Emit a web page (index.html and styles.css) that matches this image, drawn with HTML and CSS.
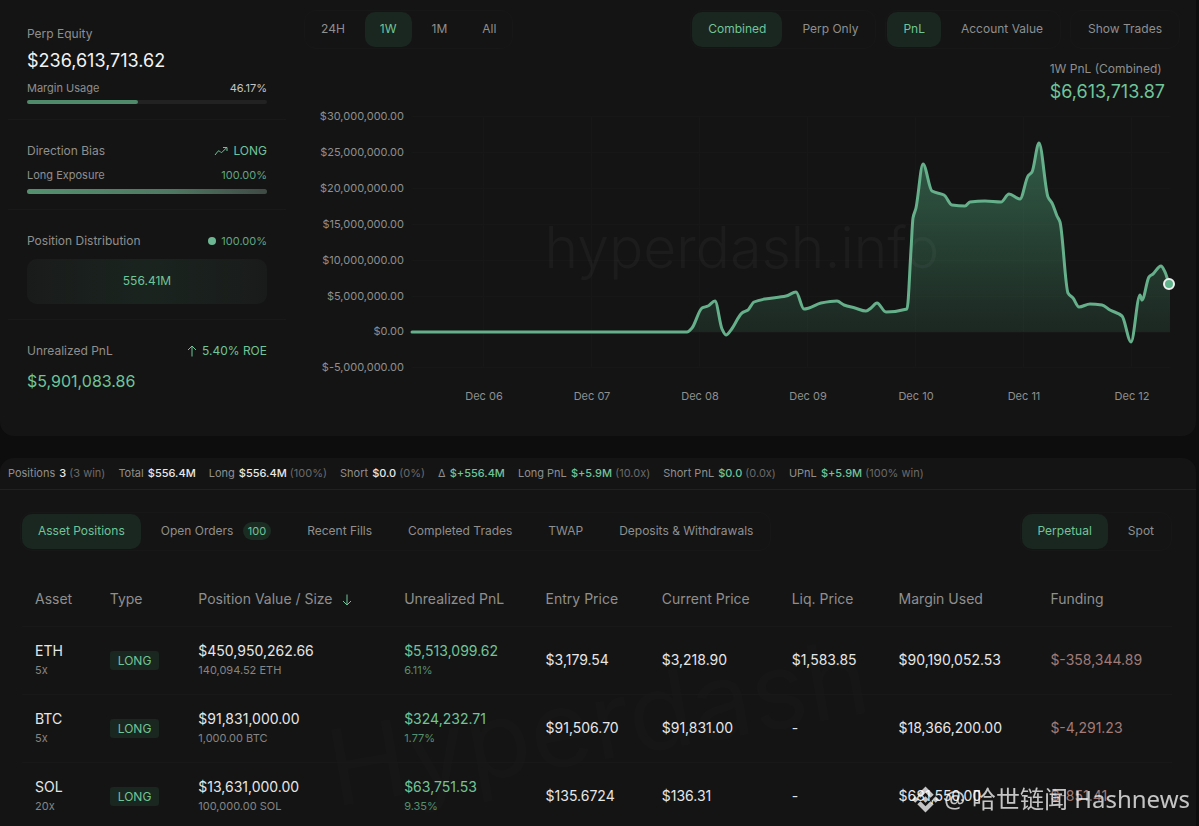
FILE: index.html
```html
<!DOCTYPE html>
<html lang="en">
<head>
  <meta charset="UTF-8">
  <meta name="viewport" content="width=device-width, initial-scale=1.0">
  <title>Hyperdash - Trader</title>
  <link rel="stylesheet" href="styles.css">
</head>
<body>
  <section class="panel overview">
    <aside class="summary">
      <div class="summary-block">
        <div class="summary-title">Perp Equity</div>
        <div class="summary-value">$236,613,713.62</div>
        <div class="summary-row small"><span>Margin Usage</span><span class="light">46.17%</span></div>
        <div class="bar"><div class="bar-fill" style="width: 46.17%"></div></div>
      </div>
      <div class="summary-block">
        <div class="summary-row">
          <span>Direction Bias</span>
          <span class="green icon-text">
            <svg width="14" height="10" viewBox="0 0 14 10"><path d="M1 9 L4 5.2 Q4.8 4.4 5.6 5.2 L6.6 6.2 Q7.4 7 8.2 6 L12.4 2 M9 1.5 L13 1.5 L13 5"/></svg>
            LONG
          </span>
        </div>
        <div class="summary-row small exposure"><span>Long Exposure</span><span class="green-dim">100.00%</span></div>
        <div class="bar bar-long"><div class="bar-fill bar-fade" style="width: 100%"></div></div>
      </div>
      <div class="summary-block">
        <div class="summary-row">
          <span>Position Distribution</span>
          <span class="green-dim small icon-text"><i class="dot"></i>100.00%</span>
        </div>
        <div class="distribution">556.41M</div>
      </div>
      <div class="summary-block">
        <div class="summary-row">
          <span>Unrealized PnL</span>
          <span class="green icon-text">
            <svg width="10" height="12" viewBox="0 0 10 12"><path d="M5 11.5 V1 M1 5 L5 1 L9 5"/></svg>
            5.40% ROE
          </span>
        </div>
        <div class="summary-value upnl">$5,901,083.86</div>
      </div>
    </aside>

    <div class="chart-pane">
      <div class="toolbar">
        <div class="group ranges">
          <button type="button">24H</button>
          <button type="button" class="active">1W</button>
          <button type="button">1M</button>
          <button type="button">All</button>
        </div>
        <div class="toolbar-right">
          <div class="group">
            <button type="button" class="active">Combined</button>
            <button type="button">Perp Only</button>
          </div>
          <div class="group">
            <button type="button" class="active">PnL</button>
            <button type="button">Account Value</button>
          </div>
          <div class="group">
            <button type="button">Show Trades</button>
          </div>
        </div>
      </div>
      <div class="chart-total">
        <div>
          <div class="chart-label">1W PnL (Combined)</div>
          <div class="chart-value">$6,613,713.87</div>
        </div>
      </div>
      <svg class="chart" viewBox="300 104 880 306">
        <defs>
          <linearGradient id="area" gradientUnits="userSpaceOnUse" x1="0" y1="143" x2="0" y2="332">
            <stop offset="0" stop-color="#55b384" stop-opacity="0.45"/>
            <stop offset="1" stop-color="#55b384" stop-opacity="0.12"/>
          </linearGradient>
          <clipPath id="above"><rect x="412" y="104" width="758" height="228"/></clipPath>
        </defs>
        <g class="grid">
          <path d="M412 116.5 H1170 M412 152.5 H1170 M412 188.5 H1170 M412 224.5 H1170 M412 260.5 H1170 M412 296.5 H1170 M412 332.5 H1170 M412 367.5 H1170"/>
          <path d="M483.5 116 V368 M591.5 116 V368 M699.5 116 V368 M807.5 116 V368 M915.5 116 V368 M1023.5 116 V368 M1131.5 116 V368"/>
        </g>
        <path id="pnlArea" fill="url(#area)" clip-path="url(#above)"/>
        <text class="chart-mark" x="742" y="268">hyperdash.info</text>
        <g class="y-labels">
          <text x="404" y="120">$30,000,000.00</text>
          <text x="404" y="156">$25,000,000.00</text>
          <text x="404" y="192">$20,000,000.00</text>
          <text x="404" y="228">$15,000,000.00</text>
          <text x="404" y="264">$10,000,000.00</text>
          <text x="404" y="300">$5,000,000.00</text>
          <text x="404" y="335">$0.00</text>
          <text x="404" y="371">$-5,000,000.00</text>
        </g>
        <g class="x-labels">
          <text x="484" y="400">Dec 06</text>
          <text x="592" y="400">Dec 07</text>
          <text x="700" y="400">Dec 08</text>
          <text x="808" y="400">Dec 09</text>
          <text x="916" y="400">Dec 10</text>
          <text x="1024" y="400">Dec 11</text>
          <text x="1132" y="400">Dec 12</text>
        </g>
        <path id="pnlLine" class="line"/>
        <circle class="marker" cx="1169" cy="284" r="5"/>
      </svg>
    </div>
  </section>

  <section class="panel positions">
    <div class="stats">
      <span>Positions <b>3</b> <em>(3 win)</em></span>
      <span>Total <b>$556.4M</b></span>
      <span>Long <b>$556.4M</b> <em>(100%)</em></span>
      <span>Short <b>$0.0</b> <em>(0%)</em></span>
      <span>Δ <b class="green">$+556.4M</b></span>
      <span>Long PnL <b class="green">$+5.9M</b> <em>(10.0x)</em></span>
      <span>Short PnL <b class="green">$0.0</b> <em>(0.0x)</em></span>
      <span>UPnL <b class="green">$+5.9M</b> <em>(100% win)</em></span>
    </div>

    <div class="tabs">
      <div class="group">
        <button type="button" class="active">Asset Positions</button>
        <button type="button">Open Orders <span class="count">100</span></button>
        <button type="button">Recent Fills</button>
        <button type="button">Completed Trades</button>
        <button type="button">TWAP</button>
        <button type="button">Deposits &amp; Withdrawals</button>
      </div>
      <div class="group">
        <button type="button" class="active">Perpetual</button>
        <button type="button">Spot</button>
      </div>
    </div>

    <div class="table-wrap">
      <div class="table-mark">Hyperdash</div>
      <table>
        <colgroup>
          <col class="c-asset"><col class="c-type"><col class="c-value"><col class="c-upnl"><col class="c-entry">
          <col class="c-current"><col class="c-liq"><col class="c-margin"><col>
        </colgroup>
        <thead>
          <tr>
            <th>Asset</th>
            <th>Type</th>
            <th>Position Value / Size
              <svg class="sort" width="10" height="12" viewBox="0 0 10 12"><path d="M5 0.5 V11 M1 7 L5 11 L9 7"/></svg>
            </th>
            <th>Unrealized PnL</th>
            <th>Entry Price</th>
            <th>Current Price</th>
            <th>Liq. Price</th>
            <th>Margin Used</th>
            <th>Funding</th>
          </tr>
        </thead>
        <tbody>
          <tr>
            <td>ETH<small>5x</small></td>
            <td><span class="side">LONG</span></td>
            <td>$450,950,262.66<small>140,094.52 ETH</small></td>
            <td class="green">$5,513,099.62<small>6.11%</small></td>
            <td>$3,179.54</td>
            <td>$3,218.90</td>
            <td>$1,583.85</td>
            <td>$90,190,052.53</td>
            <td class="red">$-358,344.89</td>
          </tr>
          <tr>
            <td>BTC<small>5x</small></td>
            <td><span class="side">LONG</span></td>
            <td>$91,831,000.00<small>1,000.00 BTC</small></td>
            <td class="green">$324,232.71<small>1.77%</small></td>
            <td>$91,506.70</td>
            <td>$91,831.00</td>
            <td>-</td>
            <td>$18,366,200.00</td>
            <td class="red">$-4,291.23</td>
          </tr>
          <tr>
            <td>SOL<small>20x</small></td>
            <td><span class="side">LONG</span></td>
            <td>$13,631,000.00<small>100,000.00 SOL</small></td>
            <td class="green">$63,751.53<small>9.35%</small></td>
            <td>$135.6724</td>
            <td>$136.31</td>
            <td>-</td>
            <td>$681,550.00</td>
            <td class="red">$-851.41</td>
          </tr>
        </tbody>
      </table>
    </div>
  </section>

  <div class="credit">
    <svg width="27" height="27" viewBox="0 0 28 28">
      <path d="M14 0.5 L22.5 9 L19.2 12.3 L14 7.1 L8.8 12.3 L5.5 9 Z"/>
      <path d="M14 27.5 L22.5 19 L19.2 15.7 L14 20.9 L8.8 15.7 L5.5 19 Z"/>
      <path d="M14 10.6 L17.4 14 L14 17.4 L10.6 14 Z"/>
      <path d="M3.4 10.6 L6.8 14 L3.4 17.4 L0 14 Z"/>
      <path d="M24.6 10.6 L28 14 L24.6 17.4 L21.2 14 Z"/>
    </svg>
    <span>@ 哈世链闻 Hashnews</span>
  </div>

  <script src="chart.js"></script>
</body>
</html>
```
FILE: styles.css
```css
* {
  box-sizing: border-box;
}
body {
  margin: 0;
  padding-right: 3px;
  height: 100vh;
  overflow: hidden;
  display: flex;
  flex-direction: column;
  gap: 22px;
  background-color: #0d0d0d;
  color: #8f8f8f;
  font-family: Inter, "Liberation Sans", sans-serif;
  font-size: 12px;
}
.panel {
  background-color: #141414;
}
.green {
  color: #6fc59a;
}
.green-dim {
  color: #5fa683;
}
.red {
  color: #a07b78;
}
.light {
  color: #c4c4c4;
}
svg path {
  fill: none;
}

/* overview */
.overview {
  display: flex;
  flex-shrink: 0;
  min-height: 436px;
  border-radius: 0 0 14px 14px;
}
.summary {
  width: 294px;
  padding: 3px 8px 0;
}
.summary-block {
  padding: 21px 19px 15px;
  border-bottom: 1px solid #191919;
}
.summary-block:last-child {
  border-bottom: none;
}
.summary-title,
.summary-row {
  line-height: 20px;
}
.summary-row {
  display: flex;
  justify-content: space-between;
}
.small {
  font-size: 11px;
}
.summary-row.small {
  line-height: 16px;
}
.summary-value {
  margin: 3px 0 5px;
  font-size: 18px;
  line-height: 28px;
  color: #f2f2f2;
}
.summary-value.upnl {
  margin: 6px 0 0;
  font-size: 16px;
  color: #6fc59a;
}
.exposure {
  margin: 6px 0;
}
.icon-text {
  display: flex;
  align-items: center;
  gap: 5px;
}
.icon-text path,
.sort path {
  stroke: #6fc59a;
  stroke-width: 1;
}
.dot {
  width: 8px;
  height: 8px;
  border-radius: 50%;
  background-color: #6db693;
}
.bar {
  height: 4px;
  margin-top: 4px;
  border-radius: 3px;
  background-color: #222;
}
.bar-long {
  height: 5px;
}
.bar-fill {
  height: 100%;
  border-radius: 3px;
  background-color: #4f8a6b;
}
.bar-fade {
  background: linear-gradient(90deg, #54916f, #4f7862 60%, #3f4a45);
}
.distribution {
  margin-top: 8px;
  height: 45px;
  border-radius: 10px;
  background: linear-gradient(90deg, #191b1a, #1a241f 50%, #191b1a);
  color: #6fc59a;
  line-height: 43px;
  text-align: center;
}

/* chart */
.chart-pane {
  flex: 1;
  min-width: 0;
  padding: 10px 16px 0 6px;
}
.toolbar,
.toolbar-right,
.tabs {
  display: flex;
  justify-content: space-between;
}
.toolbar {
  padding-left: 4px;
}
.toolbar-right {
  gap: 9px;
}
.group {
  display: flex;
  gap: 4px;
  padding: 1px;
  border: 1px solid #171717;
  border-radius: 12px;
}
.group button {
  height: 35px;
  padding: 0 16px 2px;
  border: none;
  border-radius: 10px;
  background: none;
  color: #8f8f8f;
  font-family: inherit;
  font-size: 12px;
  cursor: pointer;
}
.group button.active {
  background-color: #1a2620;
  color: #6fc59a;
}
.ranges {
  gap: 5px;
}
.ranges button {
  padding: 0 15px 2px;
}
.chart-total {
  display: flex;
  justify-content: flex-end;
  padding: 10px 15px 0 0;
}
.chart-label {
  line-height: 20px;
}
.chart-value {
  font-size: 18px;
  line-height: 25px;
  color: #6fc59a;
}
.chart {
  display: block;
  width: 100%;
  height: auto;
}
.chart text {
  fill: #8f8f8f;
  font-size: 11px;
}
.y-labels {
  text-anchor: end;
}
.x-labels {
  text-anchor: middle;
}
.grid path {
  stroke: #171717;
}
.chart .chart-mark {
  fill: #fff;
  fill-opacity: 0.035;
  font-size: 57px;
  font-weight: 300;
  text-anchor: middle;
}
.chart .line {
  stroke: #65b08b;
  stroke-width: 3;
  stroke-linecap: round;
  stroke-linejoin: round;
}
#pnlArea {
  fill: url(#area);
}
.marker {
  fill: #5fb38b;
  stroke: #f0f0f0;
  stroke-width: 2;
}

/* positions */
.positions {
  flex: 1 0 auto;
  border-radius: 14px 14px 0 0;
}
.stats {
  display: flex;
  gap: 13px;
  padding: 0 8px;
  border-bottom: 1px solid #212121;
  font-size: 11px;
  line-height: 31px;
  white-space: nowrap;
}
.stats b {
  margin-left: 1px;
  font-weight: 500;
}
.stats b:not(.green) {
  color: #e8e8e8;
}
.stats em {
  font-style: normal;
  color: #6a6a6a;
}
.tabs {
  padding: 22px 24px 0 20px;
}
.count {
  display: inline-block;
  margin-left: 6px;
  padding: 0 5px;
  border-radius: 9px;
  background-color: #1b2c23;
  color: #6fc59a;
  font-size: 11px;
  line-height: 18px;
}
.table-wrap {
  position: relative;
  padding: 20px 24px 0 22px;
}
.table-mark {
  position: absolute;
  top: 106px;
  left: 50%;
  color: rgba(255, 255, 255, 0.012);
  font-size: 106px;
  line-height: 130px;
  transform: translateX(-50%) rotate(-10deg);
}
table {
  position: relative;
  width: 100%;
  table-layout: fixed;
  border-collapse: collapse;
}
th,
td {
  padding: 0 0 0 13px;
  border-bottom: 1px solid #181818;
  text-align: left;
  white-space: nowrap;
}
th {
  height: 55px;
  font-size: 14px;
  font-weight: 400;
}
td {
  height: 68px;
  color: #e6e6e6;
  font-size: 14px;
  line-height: 20px;
}
td.green {
  color: #6fc59a;
}
td.red {
  color: #a07b78;
}
td small {
  display: block;
  color: #858585;
  font-size: 11px;
  line-height: 18px;
}
td.green small {
  color: #54906f;
}
.c-asset { width: 6.5%; }
.c-type { width: 7.7%; }
.c-value { width: 17.9%; }
.c-upnl { width: 12.3%; }
.c-entry { width: 10.1%; }
.c-current { width: 11.3%; }
.c-liq { width: 9.3%; }
.c-margin { width: 13.2%; }
.sort {
  margin-left: 6px;
  vertical-align: -2px;
}
.side {
  display: inline-block;
  padding: 0 8px;
  border-radius: 3px;
  background-color: #1a2620;
  color: #6fc59a;
  font-size: 12px;
  line-height: 19px;
}

.credit {
  position: fixed;
  right: 9px;
  bottom: 9px;
  display: flex;
  align-items: center;
  gap: 5px;
  color: rgba(255, 255, 255, 0.75);
  font-family: "Noto Sans", "Noto Sans CJK SC", sans-serif;
  font-size: 24px;
  line-height: 36px;
}
.credit path {
  fill: rgba(255, 255, 255, 0.75);
}
```
FILE: chart.js
```js
const points = [
  [412, 332], [687, 332], [692, 328], [702, 308], [708, 306], [715, 301], [722, 329], [726, 335],
  [731, 330], [742, 313], [748, 310], [754, 302], [765, 299], [786, 296], [796, 292], [804, 309],
  [809, 308], [821, 303], [837, 301], [844, 305], [855, 308], [866, 311], [871, 308], [877, 303],
  [886, 312], [907, 309], [911, 250], [913, 218], [916, 208], [923, 164], [932, 191], [944, 195],
  [952, 205], [965, 206], [970, 202], [985, 201], [1001, 202], [1009, 194], [1020, 199],
  [1028, 176], [1032, 172], [1039, 143], [1048, 197], [1052, 203], [1057, 216], [1060, 222],
  [1068, 293], [1073, 298], [1079, 307], [1090, 304], [1102, 305], [1110, 310], [1122, 316],
  [1131, 342], [1140, 295], [1142, 300], [1149, 277], [1153, 274], [1161, 266], [1165, 272], [1170, 284]
];

// monotone curve: flat tangents at peaks and dips
const slopes = points.map((p, i) => {
  if (i === 0 || i === points.length - 1) return 0;
  const a = (p[1] - points[i - 1][1]) / (p[0] - points[i - 1][0]);
  const b = (points[i + 1][1] - p[1]) / (points[i + 1][0] - p[0]);
  return a * b <= 0 ? 0 : (2 * a * b) / (a + b);
});

let line = 'M' + points[0].join(' ');
for (let i = 1; i < points.length; i++) {
  const [x0, y0] = points[i - 1];
  const [x1, y1] = points[i];
  const h = (x1 - x0) / 3;
  line += ` C${x0 + h} ${y0 + slopes[i - 1] * h} ${x1 - h} ${y1 - slopes[i] * h} ${x1} ${y1}`;
}

document.getElementById('pnlLine').setAttribute('d', line);
document.getElementById('pnlArea').setAttribute('d', line + ' V332 H412 Z');
```
